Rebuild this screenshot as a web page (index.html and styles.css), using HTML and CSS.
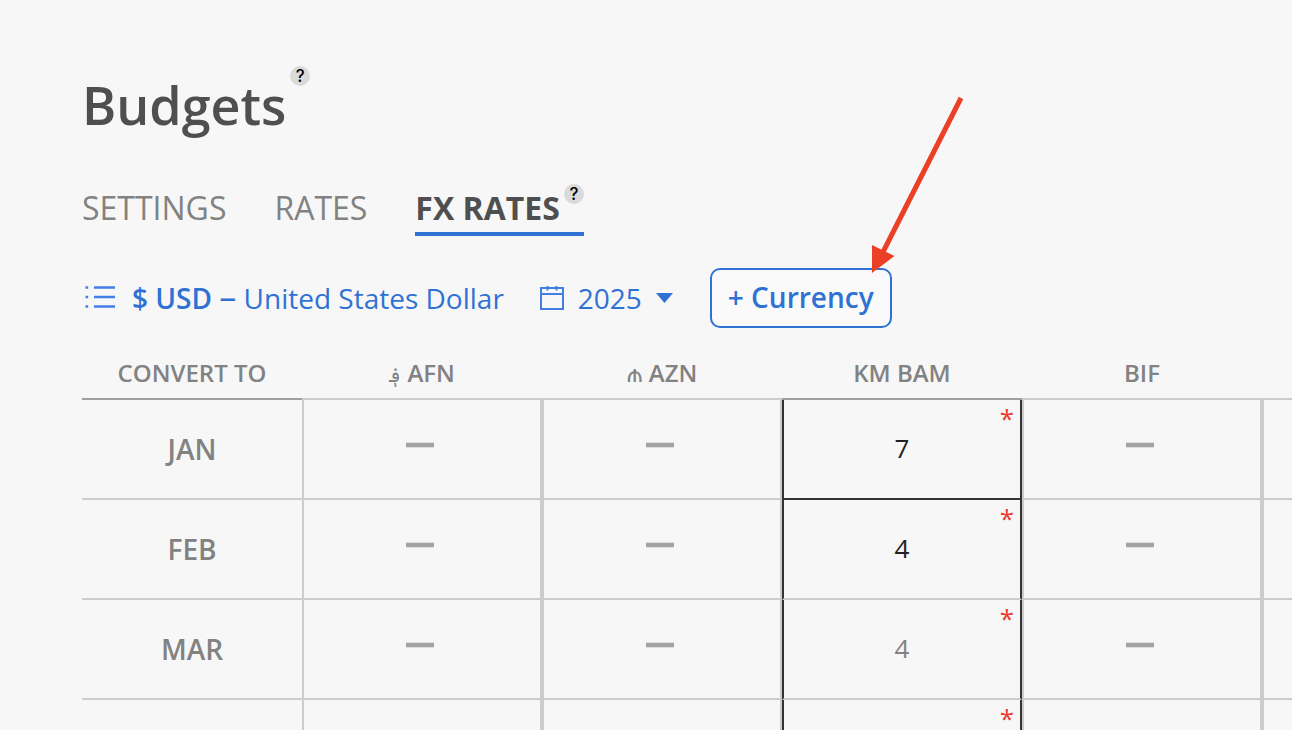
FILE: index.html
```html
<!DOCTYPE html>
<html lang="en">
<head>
<meta charset="utf-8">
<title>Budgets</title>
<link rel="stylesheet" href="styles.css">
</head>
<body>
<main class="page">
  <header class="title">
    <h1 class="title-text">Budgets</h1>
    <button class="help" type="button" aria-label="Help for budgets">?</button>
  </header>

  <nav class="tabs">
    <a class="tab" href="#settings">SETTINGS</a>
    <a class="tab" href="#rates">RATES</a>
    <span class="tab-active">
      <a class="tab tab-current" href="#fx" aria-current="page">FX RATES</a>
      <button class="help" type="button" aria-label="Help for FX rates">?</button>
    </span>
  </nav>

  <div class="toolbar">
    <button class="base" type="button">
      <svg class="icon-list" viewBox="0 0 30 24" aria-hidden="true">
        <path d="M9 1.500H30M9 11H30M9 20.500H30" stroke="currentColor" stroke-width="2.400"/>
        <path d="M0.500 1.500H3.200M0.500 11H3.200M0.500 20.500H3.200" stroke="currentColor" stroke-width="2.700"/>
      </svg>
      <span><b class="strong">$ USD <span class="endash">–</span></b> United States Dollar</span>
    </button>
    <label class="year">
      <svg class="icon-cal" viewBox="0 0 24 24" aria-hidden="true">
        <path d="M1 2H23V23H1ZM1 8H23M7.500 0V4.500M16.500 0V4.500" fill="none" stroke="currentColor" stroke-width="2"/>
      </svg>
      <select class="year-select" aria-label="Year"><option>2025</option></select>
      <svg class="icon-caret" viewBox="0 0 17 10" aria-hidden="true"><path d="M0 0H17L8.500 10Z" fill="currentColor"/></svg>
    </label>
    <div class="add-wrap">
      <button class="add" type="button">+ Currency</button>
      <svg class="arrow" viewBox="0 0 100 180" aria-hidden="true">
        <path d="M91 4L12 160" stroke="#eb4026" stroke-width="5"/>
        <path d="M2 151L24.500 162L2 179Z" fill="#eb4026"/>
      </svg>
    </div>
  </div>

  <div class="grid-wrap">
    <table class="grid">
      <thead>
        <tr><th class="month">CONVERT TO</th><th><span class="symbol afghani">؋</span> AFN</th><th><span class="symbol manat">₼</span> AZN</th><th class="on">KM BAM</th><th>BIF</th><th></th></tr>
      </thead>
      <tbody>
        <tr><th class="month" scope="row">JAN</th><td><span class="dash"></span></td><td><span class="dash"></span></td><td class="on dark"><span class="star">*</span><input class="rate" aria-label="KM BAM January" value="7"></td><td><span class="dash"></span></td><td></td></tr>
        <tr><th class="month" scope="row">FEB</th><td><span class="dash"></span></td><td><span class="dash"></span></td><td class="on"><span class="star">*</span><input class="rate" aria-label="KM BAM February" value="4"></td><td><span class="dash"></span></td><td></td></tr>
        <tr><th class="month" scope="row">MAR</th><td><span class="dash"></span></td><td><span class="dash"></span></td><td class="on"><span class="star">*</span><input class="rate inherited" aria-label="KM BAM March" value="4"></td><td><span class="dash"></span></td><td></td></tr>
        <tr><th class="month" scope="row"></th><td></td><td></td><td class="on"><span class="star">*</span></td><td></td><td></td></tr>
      </tbody>
    </table>
  </div>
</main>
</body>
</html>
```
FILE: styles.css
```css
* { box-sizing: border-box; }

body {
  margin: 0;
  height: 100vh;
  overflow: hidden;
  background: #f7f7f7;
  color: #4f4f4f;
  font-family: "Open Sans", "DejaVu Sans", sans-serif;
}

button, input, select { font: inherit; color: inherit; }

.page { padding: 66px 0 0 82px; }

.title { display: flex; align-items: flex-start; gap: 4px; }
.title-text { margin: 4px 0 0; font-size: 52px; line-height: 70px; font-weight: 600; }

.help {
  width: 20px;
  height: 20px;
  padding: 0;
  border: 0;
  border-radius: 50%;
  background: #dadada;
  color: #000;
  font-family: Inter, sans-serif;
  font-size: 17px;
  line-height: 20px;
  font-weight: 500;
  text-align: center;
}

.tabs { display: flex; align-items: flex-start; gap: 48px; margin-top: 44px; }
.tab { font-size: 32px; line-height: 48px; color: #828282; text-decoration: none; }
.tab-active { display: flex; align-items: flex-start; gap: 4px; border-bottom: 4px solid #2f72d4; }
.tab-current { font-weight: 700; color: #4f4f4f; }

.toolbar {
  display: flex;
  align-items: center;
  margin-top: 32px;
  color: #2f72d4;
  font-size: 28px;
  line-height: 40px;
}
.base { display: flex; align-items: center; gap: 17px; padding: 0 0 0 3px; border: 0; background: none; white-space: nowrap; }
.strong { font-weight: 600; }
.endash { font-size: 34px; line-height: 1; font-weight: 400; }
.icon-list { width: 30px; height: 24px; color: #447fe6; }
.year { display: flex; align-items: center; margin-left: 36px; }
.icon-cal { width: 24px; height: 24px; margin-right: 14px; color: #447fe6; }
.year-select { appearance: none; padding: 0; border: 0; background: none; }
.icon-caret { width: 17px; height: 10px; margin-left: 13px; }

.add-wrap { position: relative; margin-left: 37px; }
.add {
  display: block;
  height: 60px;
  padding: 0 16px 2px;
  border: 2px solid #2f72d4;
  border-radius: 10px;
  background: #fafafa;
  font-weight: 600;
  white-space: nowrap;
}
.arrow { position: absolute; left: 160px; bottom: 54px; width: 100px; height: 180px; pointer-events: none; }

.grid-wrap { margin-top: 20px; overflow: hidden; }
.grid { width: 1420px; table-layout: fixed; border-collapse: separate; border-spacing: 0; color: #828282; }
.grid th, .grid td { padding: 0; text-align: center; border-bottom: 2px solid #cccccc; }
.grid thead th { height: 52px; padding-bottom: 1px; font-size: 24px; line-height: 32px; font-weight: 600; }
.grid thead .month, .grid thead .on { border-bottom-color: #a0a0a0; }
.grid .month { width: 220px; }
.grid tbody th { height: 100px; font-size: 28px; line-height: 40px; font-weight: 600; }
.grid td { position: relative; height: 100px; border-left: 2px solid #cccccc; border-right: 2px solid #cccccc; }
.grid td.on { border-left-color: #333333; border-right-color: #333333; }
.grid td.dark { border-bottom-color: #333333; }

.symbol { font-weight: 400; line-height: 1; }
.afghani { font-size: 20px; }
.manat { font-family: Roboto, "Open Sans", sans-serif; }

.dash {
  display: block;
  width: 28px;
  height: 6px;
  margin: 0 0 8px calc(50% - 16px);
  border: solid #e0e0e0;
  border-width: 1px 0;
  background: #a3a3a3;
}
.rate {
  display: block;
  width: 100%;
  height: 96px;
  padding: 0 0 2px;
  border: 0;
  background: none;
  color: #222222;
  font-size: 26px;
  text-align: center;
}
.rate.inherited { color: #828282; }
.star { position: absolute; top: 0; right: 6px; font-size: 26px; line-height: 36px; color: #f0392b; }
```
